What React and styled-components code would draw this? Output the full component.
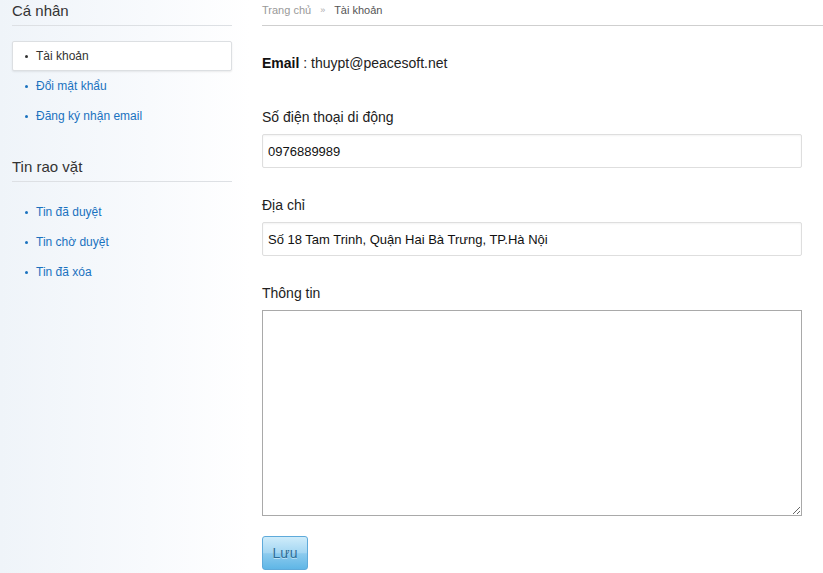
import React from 'react'
import styled, { createGlobalStyle } from 'styled-components'

const Global = createGlobalStyle`
  html, body { margin: 0; padding: 0; background: #fff; }
  body { font-family: "Liberation Sans", Arial, sans-serif; color: #222; }
  * { box-sizing: border-box; }
`

const Page = styled.div`
  display: flex;
  gap: 12px;
  min-height: 573px;
`

const Sidebar = styled.aside`
  width: 250px;
  flex-shrink: 0;
  padding: 0 18px 0 12px;
  background: linear-gradient(to right, #eff4f9 0%, #f8fafd 60%, #ffffff 100%);
`

const SideHeading = styled.h3`
  margin: ${p => (p.$first ? '0' : '25px')} 0 0;
  padding: 1px 0 4px;
  font-size: 15px;
  line-height: 20px;
  font-weight: normal;
  color: #333;
  border-bottom: 1px solid #dde0e4;
`

const SideList = styled.ul`
  list-style: none;
  margin: 15px 0 0;
  padding: 0;
`

const SideItem = styled.li`
  display: flex;
  align-items: center;
  gap: 8px;
  height: 30px;
  padding-left: 12px;
  font-size: 12px;
  color: ${p => (p.$active ? '#333' : '#1a72bf')};
  background: ${p => (p.$active ? '#fff' : 'transparent')};
  border: 1px solid ${p => (p.$active ? '#dcdfe2' : 'transparent')};
  border-radius: 2px;
  box-shadow: ${p => (p.$active ? '0 1px 2px rgba(0,0,0,0.08)' : 'none')};

  &::before {
    content: '';
    width: 3px;
    height: 3px;
    border-radius: 50%;
    background: currentColor;
  }
`

const Main = styled.main`
  flex: 1;
  display: flex;
  flex-direction: column;
`

const Breadcrumb = styled.div`
  display: flex;
  align-items: center;
  gap: 9px;
  height: 26px;
  padding-bottom: 6px;
  font-size: 11px;
  color: #999;
  border-bottom: 1px solid #cfcfcf;
`

const Sep = styled.span`
  font-size: 9px;
  color: #aaa;
`

const Current = styled.span`
  color: #555;
`

const EmailRow = styled.div`
  margin-top: 27px;
  font-size: 14px;
  line-height: 20px;
  color: #222;

  b { font-weight: bold; color: #111; }
`

const Field = styled.div`
  display: flex;
  flex-direction: column;
  margin-top: ${p => p.$gap}px;
`

const Label = styled.label`
  font-size: 14px;
  line-height: 20px;
  color: #222;
  margin-bottom: 7px;
`

const Input = styled.input`
  width: 540px;
  height: 34px;
  padding: 0 5px;
  font-family: "Liberation Sans", Arial, sans-serif;
  font-size: 13px;
  color: #111;
  border: 1px solid #dedede;
  border-radius: 2px;
  box-shadow: inset 0 1px 2px rgba(0, 0, 0, 0.05);
  outline: none;
`

const TextArea = styled.textarea`
  width: 540px;
  height: 206px;
  border: 1px solid #a9a9a9;
  font-family: "Liberation Sans", Arial, sans-serif;
  font-size: 13px;
  outline: none;
`

const SaveButton = styled.button`
  align-self: flex-start;
  margin-top: 20px;
  width: 46px;
  height: 34px;
  font-family: "Liberation Sans", Arial, sans-serif;
  font-size: 14px;
  color: #2c6c96;
  text-shadow: 0 1px 0 rgba(255, 255, 255, 0.5);
  background: linear-gradient(to bottom, #cfecfa 0%, #a3d6f2 50%, #8ccbee 52%, #5fb6e6 100%);
  border: 1px solid #5eaada;
  border-radius: 3px;
  cursor: pointer;
`

const personal = [
  { label: 'Tài khoản', active: true },
  { label: 'Đổi mật khẩu' },
  { label: 'Đăng ký nhận email' },
]

const ads = [
  { label: 'Tin đã duyệt' },
  { label: 'Tin chờ duyệt' },
  { label: 'Tin đã xóa' },
]

export default function App() {
  return (
    <>
      <Global />
      <Page>
        <Sidebar>
          <SideHeading $first>Cá nhân</SideHeading>
          <SideList>
            {personal.map(i => (
              <SideItem key={i.label} $active={i.active}>{i.label}</SideItem>
            ))}
          </SideList>

          <SideHeading>Tin rao vặt</SideHeading>
          <SideList>
            {ads.map(i => (
              <SideItem key={i.label}>{i.label}</SideItem>
            ))}
          </SideList>
        </Sidebar>

        <Main>
          <Breadcrumb>
            <span>Trang chủ</span>
            <Sep>»</Sep>
            <Current>Tài khoản</Current>
          </Breadcrumb>

          <EmailRow><b>Email</b> : thuypt@peacesoft.net</EmailRow>

          <Field $gap={34}>
            <Label>Số điện thoại di động</Label>
            <Input defaultValue="0976889989" />
          </Field>

          <Field $gap={27}>
            <Label>Địa chỉ</Label>
            <Input defaultValue="Số 18 Tam Trinh, Quận Hai Bà Trưng, TP.Hà Nội" />
          </Field>

          <Field $gap={27}>
            <Label>Thông tin</Label>
            <TextArea />
          </Field>

          <SaveButton>Lưu</SaveButton>
        </Main>
      </Page>
    </>
  )
}
